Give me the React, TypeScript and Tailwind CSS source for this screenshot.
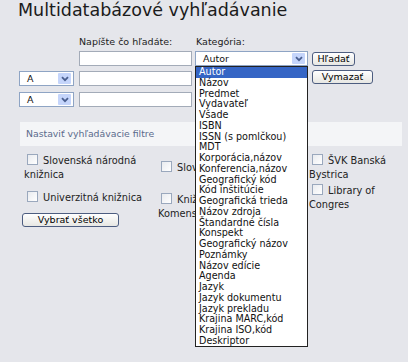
const CATEGORIES = [
  "Autor", "Názov", "Predmet", "Vydavateľ", "Všade", "ISBN", "ISSN (s pomlčkou)", "MDT",
  "Korporácia,názov", "Konferencia,názov", "Geografický kód", "Kód inštitúcie",
  "Geografická trieda", "Názov zdroja", "Štandardné čísla", "Konspekt", "Geografický názov",
  "Poznámky", "Názov edície", "Agenda", "Jazyk", "Jazyk dokumentu", "Jazyk prekladu",
  "Krajina MARC,kód", "Krajina ISO,kód", "Deskriptor",
]

function Chevron() {
  return (
    <span className="flex h-[11px] w-[13px] items-center justify-center rounded-[1px] bg-[#c5d5fb]">
      <svg width="8" height="6" viewBox="0 0 8 6">
        <path d="M1 1.2 L4 4.2 L7 1.2" fill="none" stroke="#4a5f8f" strokeWidth="1.8" />
      </svg>
    </span>
  )
}

function FakeSelect({ value, width }: { value: string; width: string }) {
  return (
    <div className={`${width} flex h-[15px] items-center justify-between border border-[#8ea4c4] bg-white pl-[7px] pr-[2px]`}>
      <span className="leading-none">{value}</span>
      <Chevron />
    </div>
  )
}

function Field() {
  return <div className="h-[15px] w-[113px] border border-[#a3abb8] bg-white" />
}

function XpButton({ label, width }: { label: string; width: string }) {
  return (
    <button
      type="button"
      className={`${width} flex h-[14px] items-center justify-center rounded-[3px] border border-[#4d5d80] bg-gradient-to-b from-white to-[#e7e7e3] text-[9.5px] leading-none text-black`}
    >
      {label}
    </button>
  )
}

function Check() {
  return (
    <span className="mr-[5px] ml-[3px] inline-block h-[11px] w-[11px] border border-[#9aa8bd] bg-gradient-to-br from-[#e9ebef] to-white align-[-1px]" />
  )
}

export default function App() {
  return (
    <div
      className="relative h-[362px] w-[408px] overflow-hidden bg-[#e5e6eb] text-[9.5px] text-[#111]"
      style={{ fontFamily: '"DejaVu Sans", Verdana, sans-serif' }}
    >
      <h1 className="h-[20px] pl-[18px] text-[17.5px] leading-[20px] font-normal text-[#1b1b1b]">
        Multidatabázové vyhľadávanie
      </h1>

      <div className="mt-[16px] flex h-[12px] items-center leading-[12px] text-[#222]">
        <span className="ml-[79px] w-[117px]">Napíšte čo hľadáte:</span>
        <span>Kategória:</span>
      </div>

      <div className="mt-[3px] flex items-start pl-[19px]">
        <div className="w-[55px]" />
        <div className="ml-[5px]"><Field /></div>
        <div className="ml-[3px]"><FakeSelect value="Autor" width="w-[113px]" /></div>
        <div className="ml-[4px] mt-[1px]"><XpButton label="Hľadať" width="w-[43px]" /></div>
      </div>

      <div className="mt-[5px] flex items-start pl-[19px]">
        <FakeSelect value="A" width="w-[55px]" />
        <div className="ml-[5px]"><Field /></div>
        <div className="ml-[3px] w-[113px]" />
        <div className="ml-[4px] -mt-[1px]"><XpButton label="Vymazať" width="w-[61px]" /></div>
      </div>

      <div className="mt-[6px] flex items-start pl-[19px]">
        <FakeSelect value="A" width="w-[55px]" />
        <div className="ml-[5px]"><Field /></div>
      </div>

      <div className="mt-[15px] ml-[20px] mr-[6px] flex h-[24px] items-center bg-[#f4f5f7] pl-[6px] text-[9.3px] text-[#5b6b8c]">
        Nastaviť vyhľadávacie filtre
      </div>

      <div className="mt-[8px] grid grid-cols-[134px_151px_80px] grid-rows-[28px_28px] gap-y-[2px] pl-[24px] text-[9.8px] leading-[14px] text-[#222]">
        <div className="self-center"><Check />Slovenská národná knižnica</div>
        <div className="self-center overflow-hidden whitespace-nowrap pr-[10px]"><Check />Slovenská technická</div>
        <div className="self-center"><Check />ŠVK Banská Bystrica</div>
        <div className="self-center"><Check />Univerzitná knižnica</div>
        <div className="self-start overflow-hidden pt-[9px] pr-[20px]"><Check />Knižnica UK Komenského</div>
        <div className="self-center"><Check />Library of Congres</div>
      </div>

      <div className="mt-[1px] ml-[22px]">
        <XpButton label="Vybrať všetko" width="w-[97px]" />
      </div>

      <ul className="absolute top-[66px] left-[195px] h-[281px] w-[113px] border border-[#222] bg-white text-[9.6px] leading-[10.75px]">
        {CATEGORIES.map((c, i) => (
          <li key={c} className={i === 0 ? "bg-[#3565c5] pl-[3px] text-white" : "pl-[3px] text-[#111]"}>
            {c}
          </li>
        ))}
      </ul>
    </div>
  )
}
